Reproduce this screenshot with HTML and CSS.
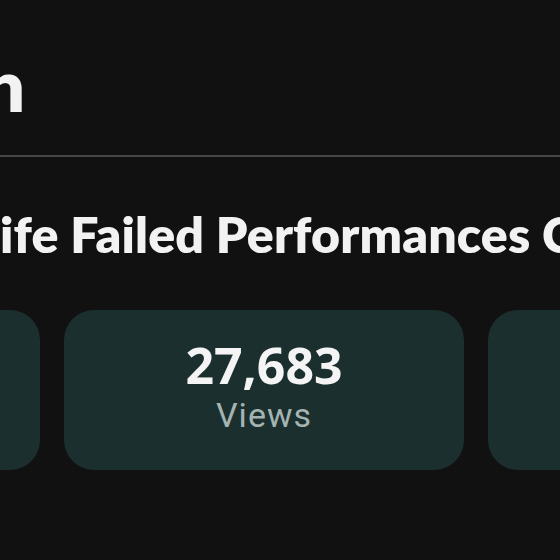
FILE: index.html
```html
<!DOCTYPE html>
<html>
<head>
<meta charset="utf-8">
<link rel="stylesheet" href="styles.css">
</head>
<body>
<div class="page">
  <div class="title-row"><h1 class="title">Compilation</h1></div>
  <hr class="divider">
  <h2 class="heading"><span class="cut"><span>Real L</span></span><span>ife Failed Performances Compilation</span></h2>
  <div class="stats">
    <div class="card"><div class="num">1,204</div><div class="label">Likes</div></div>
    <div class="card"><div class="num">27,683</div><div class="label">Views</div></div>
    <div class="card"><div class="num">312</div><div class="label">Shares</div></div>
  </div>
</div>
</body>
</html>
```
FILE: styles.css
```css
html, body {
  margin: 0;
  padding: 0;
  background: #111111;
  overflow: hidden;
}
.page {
  width: 560px;
  height: 560px;
  overflow: hidden;
  font-family: Lato, "Noto Sans", sans-serif;
  color: #f2f2f2;
}
.title-row {
  display: flex;
  justify-content: flex-end;
  width: 25px;
  height: 155px;
  align-items: flex-start;
}
.title {
  margin: 0;
  padding-top: 44px;
  font-size: 72px;
  line-height: 80px;
  font-weight: 800;
  white-space: nowrap;
}
.divider {
  margin: 0;
  border: 0;
  height: 2px;
  background: #474747;
  width: 560px;
}
.heading {
  display: flex;
  margin: 0;
  padding-top: 47px;
  font-size: 50px;
  line-height: 60px;
  font-weight: 800;
  letter-spacing: 0.15px;
  white-space: nowrap;
}
.cut {
  display: flex;
  justify-content: flex-end;
  width: 0;
}
.stats {
  display: flex;
  gap: 24px;
  margin-left: -360px;
  margin-top: 46px;
}
.card {
  flex: 0 0 400px;
  height: 152px;
  padding-bottom: 8px;
  border-radius: 30px;
  background: #1b2f2f;
  display: flex;
  flex-direction: column;
  align-items: center;
  justify-content: center;
}
.num {
  font-family: "Noto Sans", sans-serif;
  font-size: 50px;
  line-height: 56px;
  font-weight: 700;
  color: #f4f4f4;
}
.label {
  margin-top: 2px;
  font-family: Roboto, sans-serif;
  font-size: 34px;
  line-height: 40px;
  color: #a3b4b2;
  letter-spacing: 1px;
}
```
